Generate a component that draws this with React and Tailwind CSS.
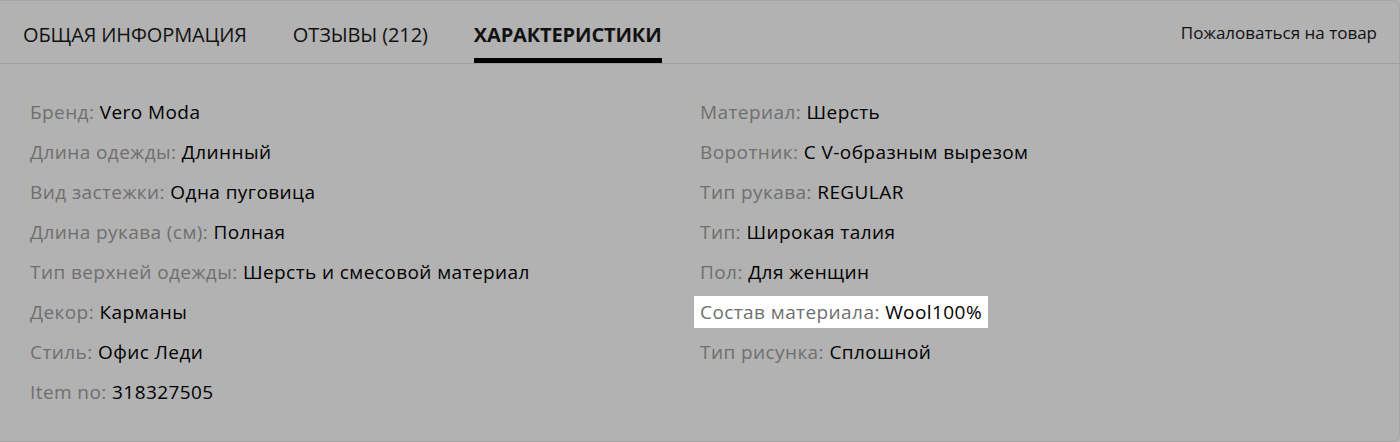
import React from 'react';

const left = [
  ['Бренд', 'Vero Moda'],
  ['Длина одежды', 'Длинный'],
  ['Вид застежки', 'Одна пуговица'],
  ['Длина рукава (см)', 'Полная'],
  ['Тип верхней одежды', 'Шерсть и смесовой материал'],
  ['Декор', 'Карманы'],
  ['Стиль', 'Офис Леди'],
  ['Item no', '318327505'],
];

const right = [
  ['Материал', 'Шерсть'],
  ['Воротник', 'С V-образным вырезом'],
  ['Тип рукава', 'REGULAR'],
  ['Тип', 'Широкая талия'],
  ['Пол', 'Для женщин'],
  ['Состав материала', 'Wool100%', true],
  ['Тип рисунка', 'Сплошной'],
];

function Row({ label, value, hl }) {
  return (
    <div className="h-10 flex items-center">
      <span className={hl ? 'bg-white px-1.5 py-[3px] -ml-1.5 leading-[26px]' : 'leading-[26px]'}>
        <span className="text-[#6f6f6f]">{label}: </span>
        <span className="text-black">{value}</span>
      </span>
    </div>
  );
}

export default function App() {
  return (
    <div className="w-[1400px] h-[442px] bg-[#b2b2b2] font-['Open_Sans',sans-serif]">
      <div className="h-full border border-l-0 border-[#a6a6a6] rounded-r-lg">
        <div className="h-[63px] border-b border-[#9f9f9f] flex items-end pl-[23px] pr-[22px]">
          <div className="flex items-end gap-[46px] text-[20px] leading-[28px] uppercase text-[#111] tracking-[-0.12px]">
            <div className="pb-[14px]">Общая информация</div>
            <div className="pb-[14px]">Отзывы (212)</div>
            <div className="pb-[9px] font-bold border-b-[5px] border-black">Характеристики</div>
          </div>
          <div className="ml-auto pb-[18px] text-[17px] text-[#111]">Пожаловаться на товар</div>
        </div>
        <div className="grid grid-cols-[670px_1fr] pl-[30px] pt-[28px] text-[19px] tracking-[0.42px]">
          <div>
            {left.map(([l, v]) => (
              <Row key={l} label={l} value={v} />
            ))}
          </div>
          <div>
            {right.map(([l, v, hl]) => (
              <Row key={l} label={l} value={v} hl={hl} />
            ))}
          </div>
        </div>
      </div>
    </div>
  );
}
